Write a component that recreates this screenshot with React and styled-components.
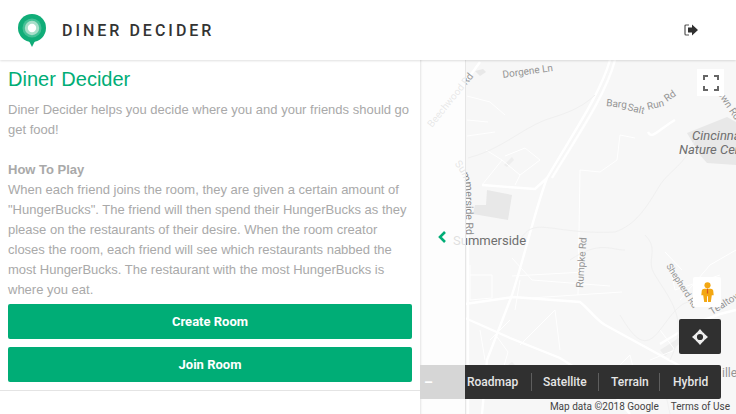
import React from "react";
import styled, { createGlobalStyle } from "styled-components";

const Global = createGlobalStyle`
  html, body { margin: 0; padding: 0; background: #fff; overflow: hidden; }
  body { font-family: "Liberation Sans", Arial, sans-serif; }
`;

const Page = styled.div`
  width: 736px;
  height: 414px;
  display: flex;
  flex-direction: column;
  overflow: hidden;
`;
const Header = styled.header`
  height: 60px;
  flex: none;
  display: flex;
  align-items: center;
  padding: 0 38px 0 17px;
  background: #fff;
  box-shadow: 0 1px 2px rgba(0,0,0,.12);
  position: relative;
  z-index: 3;
`;
const Brand = styled.h1`
  margin: 0 0 0 15px;
  font: 500 16px Roboto, Arial, sans-serif;
  letter-spacing: 3px;
  color: #333;
  flex: 1;
`;
const Body = styled.main`
  flex: 1;
  display: flex;
  min-height: 0;
`;
const Panel = styled.section`
  width: 420px;
  flex: none;
  height: 331px;
  box-sizing: border-box;
  padding: 7px 8px 0;
  border-bottom: 1px solid #e4e4e4;
  display: flex;
  flex-direction: column;
`;
const Title = styled.h2`
  margin: 0 0 9px;
  height: 24px;
  font-weight: 400;
  font-size: 20px;
  line-height: 24px;
  color: #00ad76;
`;
const Copy = styled.p`
  margin: 0;
  font: 400 13px/20px "Liberation Sans", Arial, sans-serif;
  color: #a9a9a9;
`;
const Strong = styled.strong`
  display: block;
  font-weight: 700;
  margin-top: 20px;
`;
const Btn = styled.button`
  display: block;
  width: 404px;
  height: 35px;
  margin-top: 8px;
  border: 0;
  border-radius: 2px;
  background: #00ad76;
  color: #fff;
  font: 700 13px Roboto, Arial, sans-serif;
  &:first-of-type { margin-top: 4px; }
`;
const MapArea = styled.div`
  flex: 1;
  position: relative;
  overflow: hidden;
  background: #f7f7f7;
`;
const MapSvg = styled.svg`
  display: block;
  position: absolute;
  inset: 0;
`;
const Shade = styled.div`
  position: absolute;
  left: 0;
  top: 0;
  bottom: 0;
  width: 45px;
  background: rgba(255,255,255,.78);
  box-shadow: inset 2px 0 2px -1px #e4e4e4, 1px 0 0 #e6e6e6;
`;
const Chevron = styled.svg`
  position: absolute;
  left: 18px;
  top: 171px;
`;
const FullBtn = styled.div`
  position: absolute;
  right: 12px;
  top: 9px;
  width: 27px;
  height: 27px;
  display: flex;
  align-items: center;
  justify-content: center;
  background: #fff;
`;
const PegBox = styled.div`
  position: absolute;
  right: 15px;
  top: 217px;
  width: 28px;
  height: 30px;
  background: #fff;
  border-radius: 2px;
  display: flex;
  align-items: center;
  justify-content: center;
`;
const MoveBtn = styled.div`
  position: absolute;
  right: 15px;
  top: 259px;
  width: 42px;
  height: 35px;
  background: #303030;
  border-radius: 2px;
  display: flex;
  align-items: center;
  justify-content: center;
`;
const TypeBar = styled.div`
  position: absolute;
  right: 15px;
  top: 305px;
  width: 256px;
  height: 34px;
  padding-left: 2px;
  box-sizing: border-box;
  background: #303030;
  border-radius: 0 2px 2px 0;
  display: flex;
  align-items: center;
  color: #e6e6e6;
  font: 500 12px Roboto, Arial, sans-serif;
`;
const ZoomBit = styled.div`
  position: absolute;
  left: 0;
  top: 305px;
  width: 45px;
  height: 34px;
  background: #d6d6d6;
  color: #fff;
  font: 700 14px/34px Roboto, Arial, sans-serif;
  padding-left: 4px;
  box-sizing: border-box;
`;
const TypeItem = styled.span`
  flex: none;
  width: ${p => p.$w}px;
  padding-left: ${p => p.$pl}px;
  box-sizing: border-box;
  line-height: 18px;
  border-right: ${p => (p.$last ? 0 : "1px solid #5e5e5e")};
`;
const Attribution = styled.div`
  position: absolute;
  right: 6px;
  bottom: 0;
  height: 15px;
  display: flex;
  gap: 12px;
  font: 400 10px/15px Roboto, Arial, sans-serif;
  color: #444;
`;

function MapDrawing() {
  const highways = [
    "M190 0 C180 35 150 78 127 118 C115 150 105 195 92 235 L67 300 L62 354",
    "M195 0 C186 35 156 78 132 118",
  ];
  const roads = [
    "M45 244 L93 237 L160 242 C170 250 178 262 187 266 L260 306 L290 330",
    "M45 258 L90 278 L140 298 L190 330 L210 354",
    "M240 284 L273 264 L300 254 L316 250",
    "M62 125 L115 129 L127 118",
    "M60 2 L47 20",
    "M48 130 L48 354",
    "M255 60 C238 70 232 80 228 72",
  ];
  const thin = [
    "M62 125 L82 100 L66 90 M82 100 L100 115 L95 125 M100 115 L120 100 L105 88 L85 96",
    "M47 36 L70 42 L85 55 M47 60 L68 62 M47 76 L75 72",
    "M160 110 L180 112 L197 100 L200 75 L215 78 M160 110 L158 235",
    "M92 198 L112 220 L190 226 M100 220 L95 250 M110 238 L202 232 M92 216 L165 212",
    "M50 205 L50 240 L72 238 L72 215 L50 215",
    "M250 205 L255 230 L300 215 M245 192 L262 210 M260 240 L290 205 L316 190",
    "M100 285 L135 250 L140 290 M70 280 L90 260",
    "M195 310 L210 295 L215 316 M230 300 L255 290 L240 270",
    "M75 274 L88 292 L80 320 M60 270 L65 300",
  ];
  const contours = [
    "M48 98 C80 90 100 70 125 60 C140 55 160 50 175 35",
    "M100 180 C115 155 130 175 195 172 C215 165 225 150 240 125 C250 110 265 105 275 80",
    "M225 175 C240 190 225 200 235 215 C250 240 270 260 250 300",
    "M200 255 C215 280 225 290 240 270 C255 250 265 235 280 245",
    "M245 330 L250 354 M150 200 C180 180 190 190 205 190",
  ];
  return (
    <MapSvg width="316" height="354" viewBox="0 0 316 354">
      <defs>
        <path id="sideRd" d="M34 104 C42 112 45 120 45.5 130 L46 180" />
        <path id="shepRd" d="M246 206 L274 250" />
        <path id="ownRd" d="M297 15 L297 33 L315 60 L325 72" />
        <path id="tealRd" d="M292 255 L332 230" />
      </defs>
      <g fill="#e8e8e8">
        <path d="M67 130 L92 135 L88 160 L53 154 L55 145 L66 145 Z" />
        <path d="M267 73 L307 57 L316 62 L316 105 L287 103 L280 95 Z" />
        <path d="M75 314 L92 302 L96 306 L80 320 Z" fill="#eeeeee" />
        <path d="M240 290 L262 276 L264 280 L245 296 Z" fill="#eeeeee" />
        <path d="M55 11 l8 -2 3 3 -6 4 z" />
        <path d="M84 105 l8 -8 2 3 -7 7 z" fill="#eeeeee" />
      </g>
      <g fill="none" stroke="#fff" strokeWidth="2.4">
        {highways.map(d => <path key={d} d={d} />)}
        {roads.map(d => <path key={d} d={d} />)}
      </g>
      <g fill="none" stroke="#fff" strokeWidth="1">
        {thin.map(d => <path key={d} d={d} />)}
      </g>
      <g fill="none" stroke="#f0f0f0" strokeWidth="1">
        {contours.map(d => <path key={d} d={d} />)}
      </g>
      <g fontFamily="Roboto, Arial, sans-serif" fontSize="10" fill="#959595">
        <text transform="translate(12 68) rotate(-51)">Beechwood Rd</text>
        <text transform="translate(83 18) rotate(-8)">Dorgene Ln</text>
        <text transform="translate(186 46) rotate(6)">Barg</text>
        <text transform="translate(207 50) rotate(14)">Salt</text>
        <text transform="translate(228 50) rotate(-14)">Run</text>
        <text transform="translate(247 42) rotate(-35)">Rd</text>
        <text fontSize="10.5" fill="#8a8a8a"><textPath href="#sideRd">Summerside Rd</textPath></text>
        <text x="33" y="185" fontSize="13" fill="#6f6f6f">Summerside</text>
        <text transform="translate(163 228) rotate(-86)">Rumpke Rd</text>
        <text fontSize="9"><textPath href="#shepRd">Shepherd Rd</textPath></text>
        <text><textPath href="#ownRd" startOffset="18">own Rd</textPath></text>
        <text><textPath href="#tealRd">Tealtown</textPath></text>
        <text x="302" y="317" fontSize="12">ille</text>
      </g>
      <g fontFamily="Roboto, Arial, sans-serif" fontSize="13" fontStyle="italic" fill="#6f6f6f">
        <text x="272" y="80">Cincinnati</text>
        <text x="259" y="94">Nature Center</text>
      </g>
    </MapSvg>
  );
}

export default function App() {
  return (
    <Page>
      <Global />
      <Header>
        <svg width="30" height="34" viewBox="0 0 30 34">
          <path d="M15 34 L11.5 27 L18.5 27 Z" fill="#10ab77" />
          <circle cx="15" cy="15" r="14" fill="#10ad78" />
          <circle cx="15" cy="15" r="9.5" fill="#45c096" />
          <circle cx="15" cy="15" r="7.2" fill="#a9dfca" />
          <circle cx="15" cy="15" r="4.2" fill="#fff" />
        </svg>
        <Brand>DINER DECIDER</Brand>
        <svg width="14" height="12" viewBox="0 0 14 12">
          <path d="M5 1 H2 Q1 1 1 2 V10 Q1 11 2 11 H5" fill="none" stroke="#555" strokeWidth="1.2" />
          <path d="M4 3.5 H8 V0.5 L14 6 L8 11.5 V8.5 H4 Z" fill="#303030" />
        </svg>
      </Header>
      <Body>
        <Panel>
          <Title>Diner Decider</Title>
          <Copy>Diner Decider helps you decide where you and your friends should go get food!</Copy>
          <Copy as="div">
            <Strong>How To Play</Strong>
            When each friend joins the room, they are given a certain amount of "HungerBucks". The friend will then spend their HungerBucks as they please on the restaurants of their desire. When the room creator closes the room, each friend will see which restaurants nabbed the most HungerBucks. The restaurant with the most HungerBucks is where you eat.
          </Copy>
          <Btn>Create Room</Btn>
          <Btn>Join Room</Btn>
        </Panel>
        <MapArea>
          <MapDrawing />
          <Shade />
          <Chevron width="9" height="12" viewBox="0 0 9 12">
            <path d="M7 1 L2 6 L7 11" fill="none" stroke="#00ad76" strokeWidth="2.6" />
          </Chevron>
          <FullBtn>
            <svg width="16" height="16" viewBox="0 0 16 16" fill="none" stroke="#666" strokeWidth="2">
              <path d="M1 5 V1 H5 M11 1 H15 V5 M15 11 V15 H11 M5 15 H1 V11" />
            </svg>
          </FullBtn>
          <PegBox>
            <svg width="13" height="20" viewBox="0 0 13 21">
              <circle cx="6.5" cy="3.5" r="3.2" fill="#f3a712" />
              <path d="M3 7 H10 Q12 7 12.5 9 L13 14 H11 L10 21 H7 V15 H6 V21 H3 L2 14 H0 L.5 9 Q1 7 3 7 Z" fill="#f3a712" />
              <path d="M6 7 H7 L7.2 12 H5.8 Z" fill="#d9541e" />
            </svg>
          </PegBox>
          <MoveBtn>
            <svg width="16" height="16" viewBox="0 0 16 16">
              <circle cx="8" cy="8" r="4.3" fill="none" stroke="#eee" strokeWidth="2.4" />
              <path d="M8 0 L11 3.4 H5 Z M8 16 L5 12.6 H11 Z M0 8 L3.4 5 V11 Z M16 8 L12.6 11 V5 Z" fill="#eee" />
            </svg>
          </MoveBtn>
          <ZoomBit>–</ZoomBit>
          <TypeBar>
            <TypeItem $w={65} $pl={0}>Roadmap</TypeItem>
            <TypeItem $w={67} $pl={11}>Satellite</TypeItem>
            <TypeItem $w={61} $pl={12}>Terrain</TypeItem>
            <TypeItem $w={61} $pl={13} $last>Hybrid</TypeItem>
          </TypeBar>
          <Attribution>
            <span>Map data ©2018 Google</span>
            <span>Terms of Use</span>
          </Attribution>
        </MapArea>
      </Body>
    </Page>
  );
}
